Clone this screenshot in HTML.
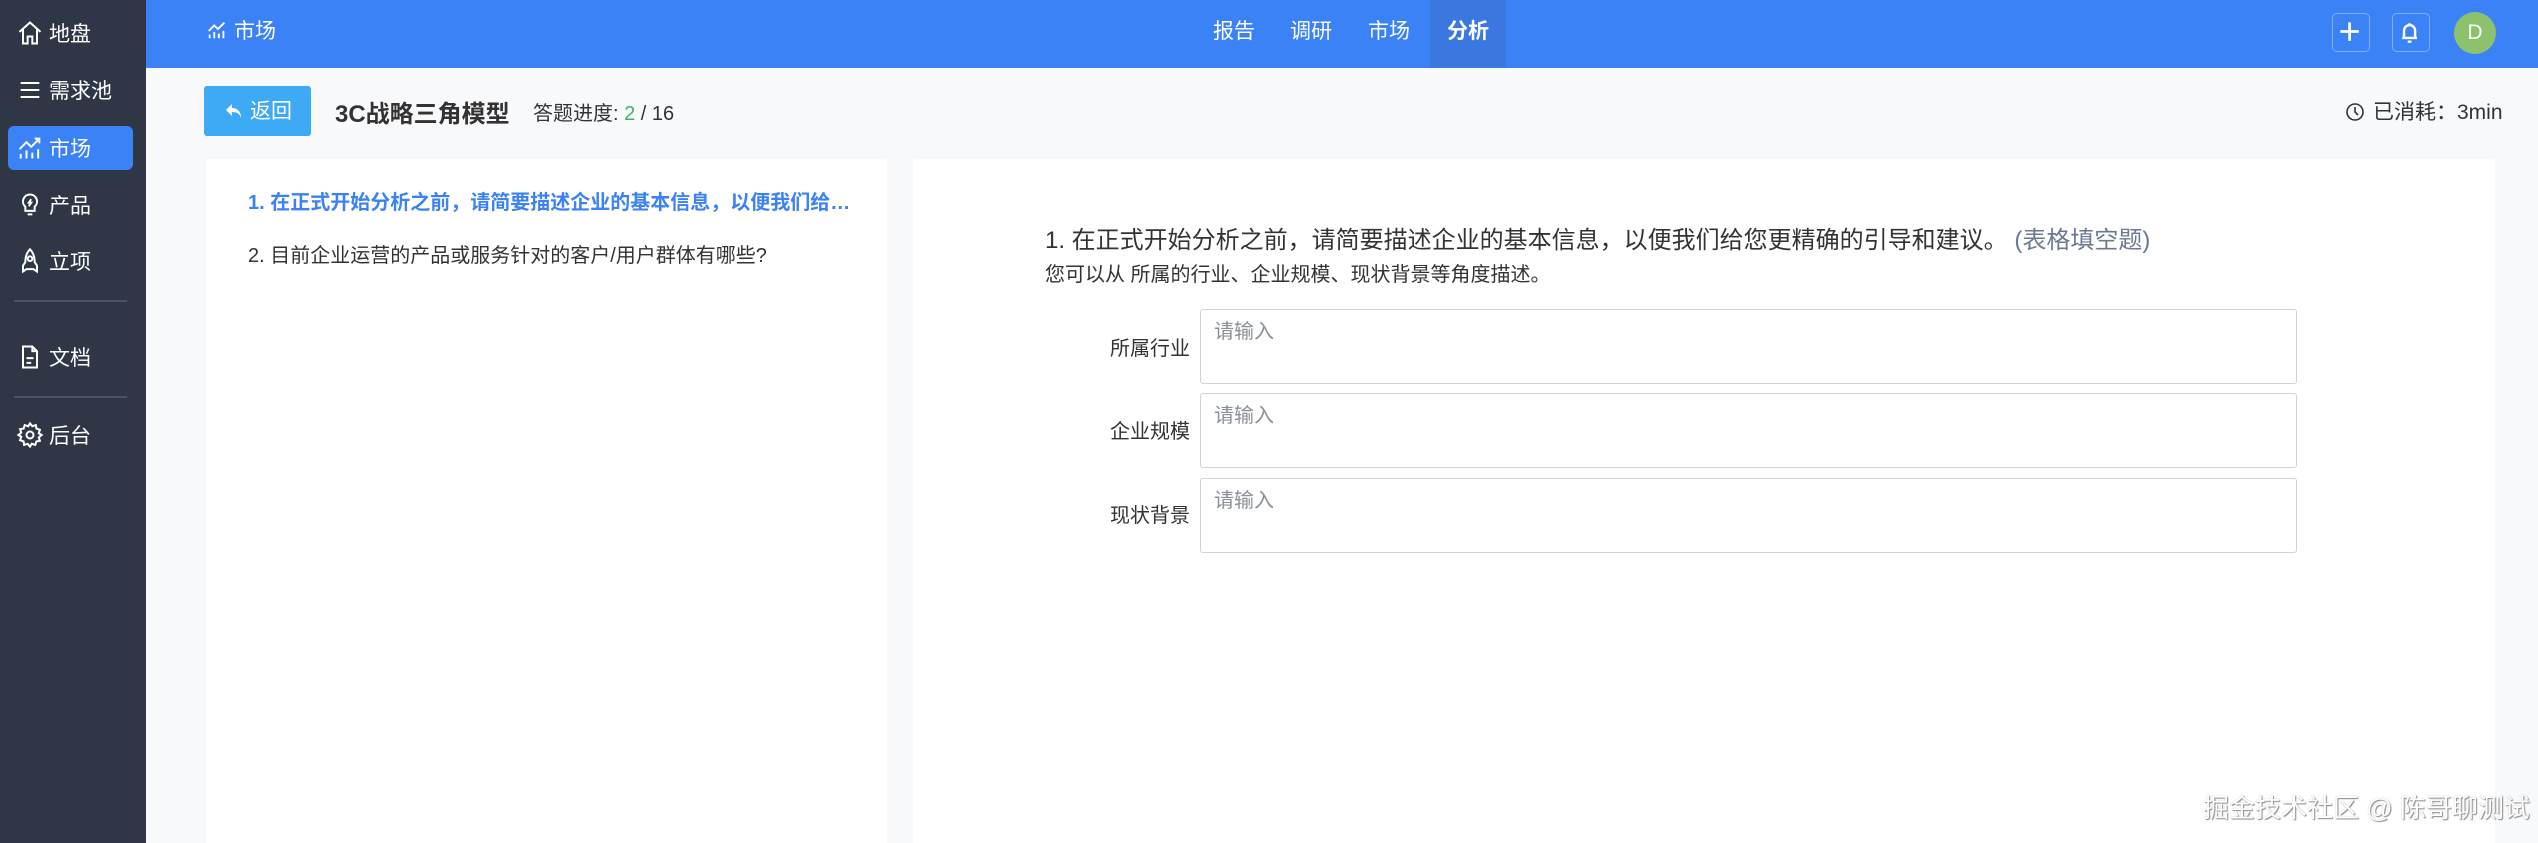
<!DOCTYPE html>
<html><head><meta charset="utf-8"><style>
*{box-sizing:border-box;margin:0;padding:0}
body{width:2538px;height:843px;overflow:hidden;background:#f8f9fb;font-family:"Liberation Sans","Noto Sans CJK SC",sans-serif;position:relative;color:#333}
.side{position:absolute;left:0;top:0;width:146px;height:843px;background:#2f3747}
.si{position:absolute;left:8px;width:125px;height:44px;color:#fff;font-size:21px;display:flex;align-items:center;padding-left:8px;border-radius:6px}
.si svg{width:28px;height:28px;margin-right:5px;stroke:#fff;fill:none;stroke-width:1.7}
.si.act{background:#3b82f6}
.div{position:absolute;left:14px;width:113px;height:2px;background:#4a5364}
.hdr{position:absolute;left:146px;top:0;right:0;height:68px;background:#3b82f6;color:#fff}
.nav{position:absolute;top:0;height:68px;line-height:64px;font-size:21px}
.btn{position:absolute;top:13px;width:38px;height:39px;border:1.5px solid rgba(255,255,255,.35);border-radius:5px}
.card{position:absolute;background:#fff;top:159px;bottom:0}
.ta{position:absolute;left:1200px;width:1097px;height:75px;border:1.5px solid #d0d4da;border-radius:3px;background:#fff;color:#8a9099;font-size:20px;padding:5px 13px}
.lb{position:absolute;left:1090px;width:100px;text-align:right;font-size:20px;color:#333}
</style></head><body>
<div class="side">
 <div class="si" style="top:11px"><svg viewBox="0 0 24 24"><path d="M3 11 12 3l9 8M6 9v12h4v-6h4v6h4V9"/></svg>地盘</div>
 <div class="si" style="top:68px"><svg viewBox="0 0 24 24"><path d="M4 6h16M4 12h16M4 18h16"/></svg>需求池</div>
 <div class="si act" style="top:126px"><svg viewBox="0 0 24 24"><path d="M3 13l6-6 4 4 7-7M16 4h4v4M4 21v-4M9 21v-7M14 21v-5M19 21v-8"/></svg>市场</div>
 <div class="si" style="top:183px"><svg viewBox="0 0 24 24"><path d="M12 3a6 6 0 0 0-4 10.5V17h8v-3.5A6 6 0 0 0 12 3zM10 20h4M13 7l-2 3h2l-2 3"/></svg>产品</div>
 <div class="si" style="top:239px"><svg viewBox="0 0 24 24"><path d="M12 2c3 3 4 7 4 11l2 3v5l-3-2H9l-3 2v-5l2-3c0-4 1-8 4-11z"/><circle cx="12" cy="10" r="2"/></svg>立项</div>
 <div class="div" style="top:300px"></div>
 <div class="si" style="top:335px"><svg viewBox="0 0 24 24"><path d="M6 3h8l4 4v14H6zM14 3v4h4M9 13h6M9 17h4"/></svg>文档</div>
 <div class="div" style="top:396px"></div>
 <div class="si" style="top:413px"><svg viewBox="0 0 24 24"><circle cx="12" cy="12" r="3"/><path d="M12 2l2 2.5 3-1 .5 3 3 1-1 3L22 12l-2.5 2 1 3-3 .5-1 3-3-1L12 22l-2-2.5-3 1-.5-3-3-1 1-3L2 12l2.5-2-1-3 3-.5 1-3 3 1z"/></svg>后台</div>
</div>
<div class="hdr">
 <div class="nav" style="left:60px"><svg viewBox="0 0 24 24" width="22" height="22" style="vertical-align:-3px;margin-right:6px" fill="none" stroke="#fff" stroke-width="2"><path d="M3 13l6-6 4 4 7-7M4 21v-4M9 21v-7M14 21v-5M19 21v-8"/></svg>市场</div>
 <div class="nav" style="left:1067px">报告</div>
 <div class="nav" style="left:1144px">调研</div>
 <div class="nav" style="left:1222px">市场</div>
 <div class="nav" style="left:1284px;width:76px;background:#3a78e0;text-align:center;font-weight:bold">分析</div>
 <div class="btn" style="left:2186px"><svg viewBox="0 0 38 39" width="35" height="36"><path d="M18 9v20M8 19h20" stroke="#fff" stroke-width="3"/></svg></div>
 <div class="btn" style="left:2246px"><svg viewBox="0 0 38 39" width="35" height="36" fill="none" stroke="#fff" stroke-width="2.6"><path d="M12 26V18a6 6 0 0 1 12 0v8M10 26h16M18 10v2M16 30h4"/></svg></div>
 <div style="position:absolute;left:2308px;top:12px;width:42px;height:42px;border-radius:50%;background:#8cc26b;color:#fff;font-size:21px;text-align:center;line-height:42px">D</div>
</div>
<div style="position:absolute;left:204px;top:86px;width:107px;height:50px;background:#3ea9f5;border-radius:3px;color:#fff;font-size:21px;line-height:52px;padding-left:20px">
<svg viewBox="0 0 20 20" width="20" height="20" style="vertical-align:-3px;margin-right:6px"><path d="M8 3 2 9l6 6v-4c5 0 8 2 9 6 0-6-3-10-9-10z" fill="#fff"/></svg>返回</div>
<div style="position:absolute;left:335px;top:94px;font-size:24px;font-weight:bold;color:#333">3C战略三角模型</div>
<div style="position:absolute;left:533px;top:97px;font-size:20px;color:#333">答题进度: <span style="color:#3db26b">2</span> / 16</div>
<div style="position:absolute;left:2345px;top:96px;font-size:21px;color:#333"><svg viewBox="0 0 20 20" width="20" height="20" style="vertical-align:-3px;margin-right:8px" fill="none" stroke="#333" stroke-width="1.6"><circle cx="10" cy="10" r="8"/><path d="M10 5v5l3 3"/></svg>已消耗：3min</div>
<div class="card" style="left:206px;width:681px">
 <div style="position:absolute;left:42px;top:27px;font-size:20px;color:#3b82f6;font-weight:bold;width:612px;white-space:nowrap;overflow:hidden;text-overflow:ellipsis">1. 在正式开始分析之前，请简要描述企业的基本信息，以便我们给您更精确的引导和建议。</div>
 <div style="position:absolute;left:42px;top:80px;font-size:20px;color:#333">2. 目前企业运营的产品或服务针对的客户/用户群体有哪些?</div>
</div>
<div class="card" style="left:913px;width:1582px"></div>
<div style="position:absolute;left:1045px;top:220px;font-size:24px;color:#333">1. 在正式开始分析之前，请简要描述企业的基本信息，以便我们给您更精确的引导和建议。 <span style="color:#6b7a90">(表格填空题)</span></div>
<div style="position:absolute;left:1045px;top:258px;font-size:20px;color:#333">您可以从 所属的行业、企业规模、现状背景等角度描述。</div>
<div class="lb" style="top:332px">所属行业</div><div class="ta" style="top:309px">请输入</div>
<div class="lb" style="top:415px">企业规模</div><div class="ta" style="top:393px">请输入</div>
<div class="lb" style="top:499px">现状背景</div><div class="ta" style="top:478px">请输入</div>
<div style="position:absolute;left:2203px;top:788px;font-size:26px;color:#fff;text-shadow:1px 1px 1px #888,0 0 1px #aaa">掘金技术社区 @ 陈哥聊测试</div>
</body></html>
